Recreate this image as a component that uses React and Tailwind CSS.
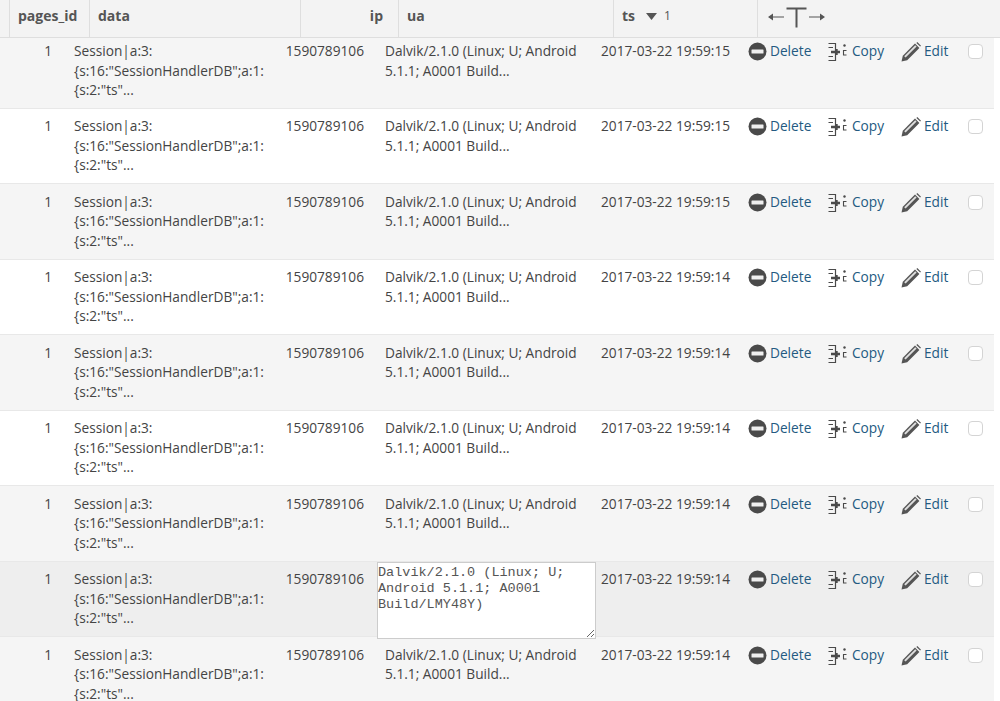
const font = { fontFamily: '"Open Sans", sans-serif' };

const timestamps = ['15', '15', '15', '14', '14', '14', '14', '14', '14'];

const DeleteIcon = () => (
  <svg width="19" height="19" viewBox="0 0 19 19" className="mt-[1px] shrink-0">
    <circle cx="9.5" cy="9.5" r="9" fill="#4a4a4a" />
    <rect x="3.5" y="7.5" width="12" height="4" rx="0.5" fill="#efefef" />
  </svg>
);

const CopyIcon = () => (
  <svg width="20" height="20" viewBox="0 0 20 20" className="mt-[1px] shrink-0" fill="none" stroke="#4a4a4a">
    <path d="M0.5 1.5h7v17h-7M0.5 5.5h4.5M0.5 14.5h4.5" strokeWidth="1.2" />
    <path d="M3 10h9M8.5 7v6" strokeWidth="2.4" />
    <path d="M18.5 8.5h-3v4.5h3" strokeWidth="1.1" />
    <circle cx="16.5" cy="3.5" r="1.2" fill="#4a4a4a" stroke="none" />
  </svg>
);

const EditIcon = () => (
  <svg width="20" height="20" viewBox="0 0 20 20" className="mt-[1px] shrink-0">
    <path d="M0.5 19.5l1.3-5.7L14 1.6l4.4 4.4L6.2 18.2z" fill="#555555" />
    <path d="M3.2 14.2l11-11 1.4 1.4-11 11z" fill="#dddddd" />
    <path d="M15.4 0.9l0.9-0.9 3.7 3.7-0.9 0.9z" fill="#555555" />
  </svg>
);

const Row = ({ seconds, first, shaded, editing }) => {
  let bg = 'bg-white';
  if (editing) bg = 'bg-[#eeeeee]';
  else if (shaded) bg = 'bg-[#f5f5f5]';

  return (
    <div
      className={`flex w-[994px] border-b border-[#e8e8e8] text-[13.7px] leading-[19.6px] text-[#444444] ${bg} ${
        first ? 'h-[70.5px] pt-[3px]' : 'h-[75.5px] pt-[7.5px]'
      }`}
    >
      <div className="w-[62px] pr-[10px] text-right">1</div>
      <div className="w-[212px] pl-[12px]">
        Session|a:3:
        <br />
        {'{s:16:"SessionHandlerDB";a:1:'}
        <br />
        {'{s:2:"ts"...'}
      </div>
      <div className="w-[98px] pr-[8px] text-right">1590789106</div>
      {editing ? (
        <div className="w-[229px] pl-[5px] -mt-[7.5px]">
          <textarea
            readOnly
            defaultValue="Dalvik/2.1.0 (Linux; U; Android 5.1.1; A0001 Build/LMY48Y)"
            className="block h-[77px] w-[219px] border border-[#cccccc] bg-white px-0 pt-[2px] text-[13.5px] leading-[16px] text-[#555555] outline-none"
            style={{ fontFamily: '"Liberation Mono", monospace' }}
          />
        </div>
      ) : (
        <div className="w-[229px] pl-[13px] pr-[10px]">
          Dalvik/2.1.0 (Linux; U; Android
          <br />
          5.1.1; A0001 Build...
        </div>
      )}
      <div className="w-[147px] whitespace-nowrap">2017-03-22 19:59:{seconds}</div>
      <div className="flex w-[80px] items-start gap-[3px] text-[#235a81]">
        <DeleteIcon />
        Delete
      </div>
      <div className="flex w-[73px] items-start gap-[4px] text-[#235a81]">
        <CopyIcon />
        Copy
      </div>
      <div className="flex w-[67px] items-start gap-[3px] text-[#235a81]">
        <EditIcon />
        Edit
      </div>
      <div className="pt-[3px]">
        <div className="h-[15px] w-[15px] rounded-[4px] border border-[#d4d4d4] bg-white" />
      </div>
    </div>
  );
};

const HeaderCell = ({ className, children }) => (
  <div className={`flex h-full shrink-0 items-center border-r border-[#dedede] pb-[6px] text-[14px] font-bold text-[#555555] ${className}`}>
    {children}
  </div>
);

export default function App() {
  return (
    <div className="h-[701px] w-[1000px] overflow-hidden bg-white" style={font}>
      <div className="flex h-[38px] border-b border-[#dedede] bg-[#f3f3f3]">
        <HeaderCell className="w-[10px]" />
        <HeaderCell className="w-[80px] pl-[8px]">pages_id</HeaderCell>
        <HeaderCell className="w-[211px] pl-[8px]">data</HeaderCell>
        <HeaderCell className="w-[98px] justify-end pr-[15px]">ip</HeaderCell>
        <HeaderCell className="w-[215px] pl-[8px]">ua</HeaderCell>
        <HeaderCell className="w-[144px] pl-[8px]">
          ts
          <svg width="11" height="7" viewBox="0 0 11 7" className="ml-[11px] mr-[7px] mt-[2px]">
            <path d="M0 0h11L5.5 7z" fill="#555555" />
          </svg>
          <span className="text-[12px] font-normal">1</span>
        </HeaderCell>
        <div className="flex h-full items-center pb-[4px] pl-[10px]">
          <svg width="58" height="22" viewBox="0 0 58 22" fill="none" stroke="#555555">
            <path d="M2 11h14M41 11h14" strokeWidth="1.2" />
            <path d="M0 11l5-3.5v7zM57 11l-5-3.5v7z" fill="#555555" stroke="none" />
            <path d="M18.5 2.5h20M28.5 2.5v19" strokeWidth="2" />
          </svg>
        </div>
      </div>
      {timestamps.map((seconds, index) => (
        <Row key={index} seconds={seconds} first={index === 0} shaded={index % 2 === 0} editing={index === 7} />
      ))}
    </div>
  );
}
